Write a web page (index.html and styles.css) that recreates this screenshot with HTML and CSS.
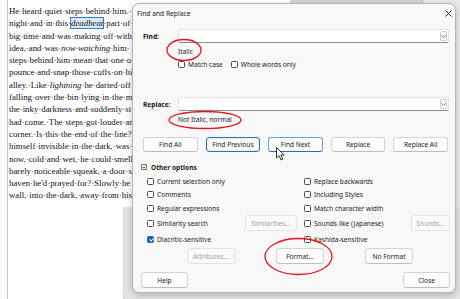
FILE: index.html
```html
<!DOCTYPE html>
<html lang="en">
<head>
    <meta charset="UTF-8">
    <title>Find and Replace</title>
    <link rel="stylesheet" href="styles.css">
</head>
<body>
    <div class="screen">
        <div class="page">
            <div class="doc">
                <div class="ln">He·heard·quiet·steps·behind·him.·</div>
                <div class="ln">night·and·in·this·<span class="sel"><em>deadbeat</em></span>·part·of·</div>
                <div class="ln">big·time·and·was·making·off·with·</div>
                <div class="ln">idea,·and·was·<em>now·watching</em>·him·</div>
                <div class="ln">steps·behind·him·mean·that·one·o</div>
                <div class="ln">pounce·and·snap·those·cuffs·on·hi</div>
                <div class="ln">alley.·Like·<em>lightning</em>·he·darted·off</div>
                <div class="ln">falling·over·the·bin·lying·in·the·m</div>
                <div class="ln">the·inky·darkness·and·suddenly·st</div>
                <div class="ln">had·come.·The·steps·got·louder·an</div>
                <div class="ln">corner.·Is·this·the·end·of·the·line?</div>
                <div class="ln">himself·invisible·in·the·dark,·was·</div>
                <div class="ln">now,·cold·and·wet,·he·could·smell</div>
                <div class="ln">barely·noticeable·squeak,·a·door·s</div>
                <div class="ln">haven·he'd·prayed·for?·Slowly·he</div>
                <div class="ln">wall,·into·the·dark,·away·from·his</div>
            </div>
        </div>
        <div class="sidebar"></div>

        <div class="backwin"></div>
        <div class="topstrip"></div>

        <div class="dialog">
            <div class="titlebar">
                <span class="title">Find and Replace</span>
                <svg class="close" width="7" height="7" viewBox="0 0 7 7"><path d="M0.5 0.5 L6.5 6.5 M6.5 0.5 L0.5 6.5" stroke="#222" stroke-width="1"/></svg>
            </div>
            <div class="dbody">
                <div class="field">
                    <span class="lbl">Find:</span>
                    <div class="combo">
                        <span class="drop"><svg width="5" height="3" viewBox="0 0 5 3"><path d="M0.3 0.3 L2.5 2.5 L4.7 0.3" fill="none" stroke="#555" stroke-width="0.8"/></svg></span>
                    </div>
                </div>
                <div class="attr">Italic</div>
                <div class="checks">
                    <span class="cb"><i class="box"></i>Match case</span>
                    <span class="cb"><i class="box"></i>Whole words only</span>
                </div>

                <div class="field replace">
                    <span class="lbl">Replace:</span>
                    <div class="combo">
                        <span class="drop"><svg width="5" height="3" viewBox="0 0 5 3"><path d="M0.3 0.3 L2.5 2.5 L4.7 0.3" fill="none" stroke="#555" stroke-width="0.8"/></svg></span>
                    </div>
                </div>
                <div class="attr">Not Italic, normal</div>

                <div class="btnrow">
                    <span class="btn">Find All</span>
                    <span class="btn focus">Find Previous</span>
                    <span class="btn default">Find Next</span>
                    <span class="btn">Replace</span>
                    <span class="btn">Replace All</span>
                </div>

                <div class="other"><i class="minus"></i>Other options</div>

                <div class="opts">
                    <span class="cb"><i class="box"></i>Current selection only</span>
                    <span class="cb"><i class="box"></i>Replace backwards</span>
                    <span class="cb"><i class="box"></i>Comments</span>
                    <span class="cb"><i class="box"></i>Including Styles</span>
                    <span class="cb"><i class="box"></i>Regular expressions</span>
                    <span class="cb"><i class="box"></i>Match character width</span>
                    <div class="optline">
                        <span class="cb"><i class="box"></i>Similarity search</span>
                        <span class="btn off sim">Similarities...</span>
                    </div>
                    <div class="optline">
                        <span class="cb"><i class="box"></i>Sounds like (Japanese)</span>
                        <span class="btn off snd">Sounds...</span>
                    </div>
                    <span class="cb"><i class="box on"></i>Diacritic-sensitive</span>
                    <span class="cb"><i class="box"></i>Kashida-sensitive</span>
                </div>

                <div class="attrrow">
                    <span class="btn off">Attributes...</span>
                    <span class="btn">Format...</span>
                    <span class="btn">No Format</span>
                </div>

                <div class="footer">
                    <span class="btn">Help</span>
                    <span class="btn">Close</span>
                </div>
            </div>
        </div>

        <svg class="marks" width="460" height="299" viewBox="0 0 460 299">
            <ellipse cx="184" cy="50" rx="17" ry="10.5"/>
            <ellipse cx="205" cy="120" rx="36" ry="8.5"/>
            <ellipse cx="298.5" cy="256.5" rx="33.5" ry="18"/>
            <path class="cursor" d="M276.5 147.5 L276.5 158 L279 155.6 L281 160 L282.8 159.2 L280.8 155 L284.2 155 Z"/>
        </svg>
    </div>
</body>
</html>
```

FILE: styles.css
```css
body {
    margin: 0;
    background: #ffffff;
}
.screen {
    position: relative;
    width: 460px;
    height: 299px;
    overflow: hidden;
    display: grid;
    grid-template-columns: 1fr 38px;
    background: #fbfbfb;
}

/* document behind the dialog */
.page {
    margin-left: 7px;
    border-left: 1px solid #c9c9c9;
    background: #ffffff;
}
.doc {
    padding: 5px 0 0 1px;
    font-family: "Liberation Serif", "Times New Roman", serif;
    font-size: 8.8px;
    line-height: 12.3px;
    color: #111;
    white-space: nowrap;
}
.sel {
    outline: 1px solid #3a78cf;
    background: #dbe8f8;
}
.sidebar {
    background: #ece9ea;
    border-left: 1px solid #b9b9b9;
}
.backwin {
    position: absolute;
    left: 123px;
    top: 207px;
    right: 0;
    bottom: 0;
    background: #e3e3e3;
    border-left: 1px solid #d2d2d2;
}
.topstrip {
    position: absolute;
    left: 290px;
    top: 0;
    width: 132px;
    height: 3px;
    background: #d5d5d5;
}

/* dialog */
.dialog {
    position: absolute;
    left: 132px;
    top: 3px;
    width: 324px;
    box-sizing: border-box;
    background: #f8f8f8;
    border: 1px solid #b5b5b5;
    border-radius: 7px;
    box-shadow: 0 2px 7px rgba(0, 0, 0, 0.22);
    font-family: "Noto Sans", "Open Sans", sans-serif;
    font-size: 6.6px;
    color: #1b1b1b;
}
.titlebar {
    height: 19px;
    display: flex;
    align-items: center;
    justify-content: space-between;
    padding: 0 3px 0 4px;
}
.title {
    font-size: 6.7px;
}
.dbody {
    padding: 0 5px 4px 8px;
}
.field {
    margin-top: 6px;
    display: grid;
    grid-template-columns: 37px 1fr;
    align-items: center;
    margin-right: 1px;
}
.field.replace {
    margin-top: 27px;
}
.lbl {
    font-weight: bold;
    padding-left: 2px;
}
.combo {
    height: 14px;
    box-sizing: border-box;
    background: #ffffff;
    border: 1px solid #e2e2e2;
    border-bottom-color: #8c8c8c;
    border-radius: 2px;
    display: flex;
    justify-content: flex-end;
    align-items: center;
    padding-right: 1px;
}
.drop {
    width: 7px;
    height: 10px;
    box-sizing: border-box;
    border: 1px solid #cfcfcf;
    border-radius: 1px;
    display: flex;
    align-items: center;
    justify-content: center;
}
.attr {
    margin-top: 4px;
    margin-left: 37px;
    line-height: 10px;
    height: 10px;
}
.checks {
    margin-top: 2px;
    margin-left: 37px;
    height: 11px;
    display: flex;
    gap: 8px;
    align-items: center;
}
.cb {
    display: flex;
    align-items: center;
    gap: 3px;
    white-space: nowrap;
}
.box {
    width: 7px;
    height: 7px;
    box-sizing: border-box;
    border: 1px solid #4a4a4a;
    border-radius: 1.5px;
    background: #fff;
    flex: none;
}
.box.on {
    background: #1c5fc4;
    border-color: #1c5fc4;
    position: relative;
}
.box.on::after {
    content: "";
    position: absolute;
    left: 1.5px;
    top: 0;
    width: 1.6px;
    height: 3.2px;
    border: solid #fff;
    border-width: 0 1px 1px 0;
    transform: rotate(40deg);
}

/* buttons */
.btn {
    height: 16px;
    box-sizing: border-box;
    display: flex;
    align-items: center;
    justify-content: center;
    background: #fdfdfd;
    border: 1px solid #d3d3d3;
    border-bottom-color: #bdbdbd;
    border-radius: 3px;
    white-space: nowrap;
}
.btn.off {
    color: #a3a3a3;
    border-color: #e3e3e3;
    background: #fafafa;
}
.btn.focus {
    border-color: #2f6dbf;
    box-shadow: inset 0 0 0 1px #e9eef7;
}
.btn.default {
    border-color: #6f9bd6;
    border-bottom-color: #2d68bb;
}
.btnrow {
    margin-top: 12px;
    margin-left: 2px;
    width: 305px;
    display: grid;
    grid-template-columns: repeat(5, 1fr);
    gap: 8px;
}
.btnrow .btn {
    height: 15px;
}
.other {
    margin-top: 10px;
    height: 10px;
    display: flex;
    align-items: center;
    gap: 4px;
    font-weight: bold;
}
.minus {
    width: 6px;
    height: 6px;
    box-sizing: border-box;
    border: 1px solid #6a6a6a;
    border-radius: 1px;
    position: relative;
}
.minus::after {
    content: "";
    position: absolute;
    left: 1px;
    top: 1.5px;
    width: 2px;
    height: 1px;
    background: #444;
}
.opts {
    margin-top: 3px;
    margin-left: 6px;
    display: grid;
    grid-template-columns: 150px 146px;
    grid-template-rows: 13px 13px 14px 16px 16px;
    column-gap: 7px;
    align-items: center;
}
.optline {
    display: flex;
    justify-content: space-between;
    align-items: center;
}
.btn.sim {
    width: 52px;
}
.btn.snd {
    width: 39px;
}
.attrrow {
    margin-top: 1px;
    margin-left: 46px;
    display: flex;
    gap: 41px;
}
.attrrow .btn {
    width: 48px;
}
.footer {
    margin-top: 8px;
    display: flex;
    justify-content: space-between;
}
.footer .btn {
    width: 47px;
}

/* red annotation circles and mouse pointer */
.marks {
    position: absolute;
    left: 0;
    top: 0;
    pointer-events: none;
}
.marks ellipse {
    fill: none;
    stroke: #e3121b;
    stroke-width: 1.3;
}
.marks .cursor {
    fill: #ffffff;
    stroke: #000000;
    stroke-width: 0.8;
}
```
